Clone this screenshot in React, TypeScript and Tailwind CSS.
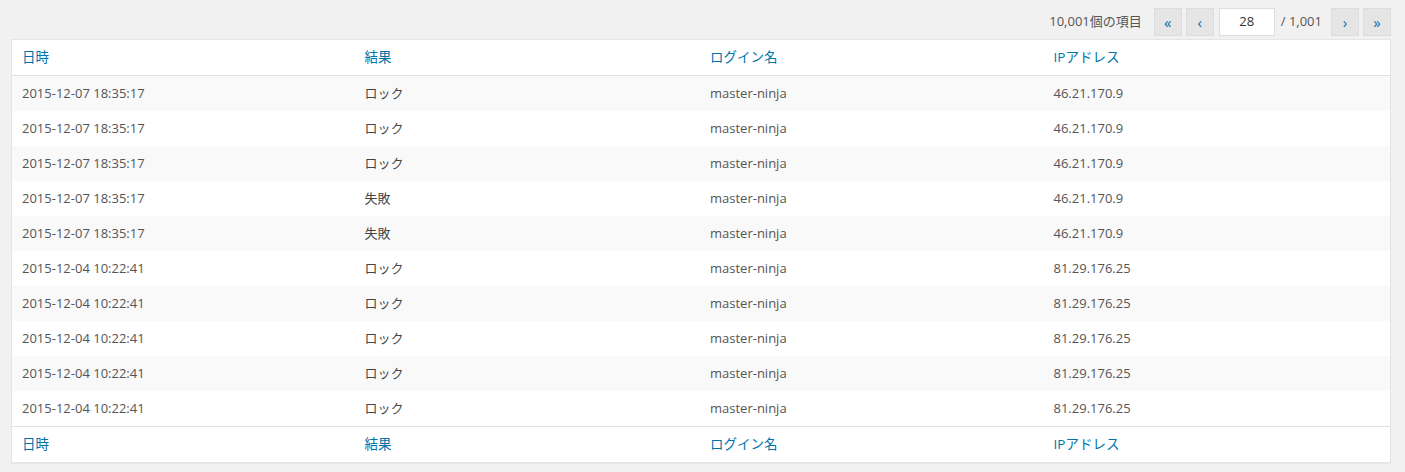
export default function App() {
  const rows = [
    ["2015-12-07 18:35:17", "ロック", "46.21.170.9"],
    ["2015-12-07 18:35:17", "ロック", "46.21.170.9"],
    ["2015-12-07 18:35:17", "ロック", "46.21.170.9"],
    ["2015-12-07 18:35:17", "失敗", "46.21.170.9"],
    ["2015-12-07 18:35:17", "失敗", "46.21.170.9"],
    ["2015-12-04 10:22:41", "ロック", "81.29.176.25"],
    ["2015-12-04 10:22:41", "ロック", "81.29.176.25"],
    ["2015-12-04 10:22:41", "ロック", "81.29.176.25"],
    ["2015-12-04 10:22:41", "ロック", "81.29.176.25"],
    ["2015-12-04 10:22:41", "ロック", "81.29.176.25"],
  ];
  const font = { fontFamily: '"Open Sans","Noto Sans CJK JP",sans-serif' };
  const Head = ({ top }: { top: boolean }) => (
    <div className={`grid grid-cols-4 h-[36px] items-center text-[13.5px] text-[#0073aa] ${top ? "border-b" : "border-t"} border-[#e1e1e1]`}>
      <div className="pl-[10px]">日時</div>
      <div className="pl-[8px]">結果</div>
      <div className="pl-[9px]">ログイン名</div>
      <div className="pl-[8px]">IPアドレス</div>
    </div>
  );
  const btn = "w-[28px] h-[28px] flex items-center justify-center bg-[#e5e5e5] border border-[#dcdcdc] text-[#0073aa] text-[15px] leading-none";
  return (
    <div className="w-[1405px] h-[472px] bg-[#f1f1f1] pl-[11px] pr-[14px] pt-[8px] text-[13px]" style={font}>
      <div className="flex items-center justify-end h-[28px] text-[#555]">
        <span className="mr-[12px]">10,001個の項目</span>
        <div className="flex items-center gap-[4px]">
          <span className={btn}>«</span>
          <span className={btn}>‹</span>
          <span className="ml-[1px] w-[56px] h-[28px] bg-white border border-[#ddd] flex items-center justify-center text-[#333]">28</span>
          <span className="ml-[2px] mr-[5px]">/ 1,001</span>
          <span className={btn}>›</span>
          <span className={btn}>»</span>
        </div>
      </div>
      <div className="mt-[3px] bg-white border border-[#e5e5e5] shadow-[0_1px_1px_rgba(0,0,0,0.04)]">
        <Head top />
        {rows.map((r, i) => (
          <div key={i} className={`grid grid-cols-4 h-[35px] items-center ${i % 2 === 0 ? "bg-[#f9f9f9]" : "bg-white"}`}>
            <div className="pl-[10px] text-[#555]">{r[0]}</div>
            <div className="pl-[8px] text-[#444]">{r[1]}</div>
            <div className="pl-[9px] text-[#555]">master-ninja</div>
            <div className="pl-[8px] text-[#555]">{r[2]}</div>
          </div>
        ))}
        <Head top={false} />
      </div>
    </div>
  );
}
